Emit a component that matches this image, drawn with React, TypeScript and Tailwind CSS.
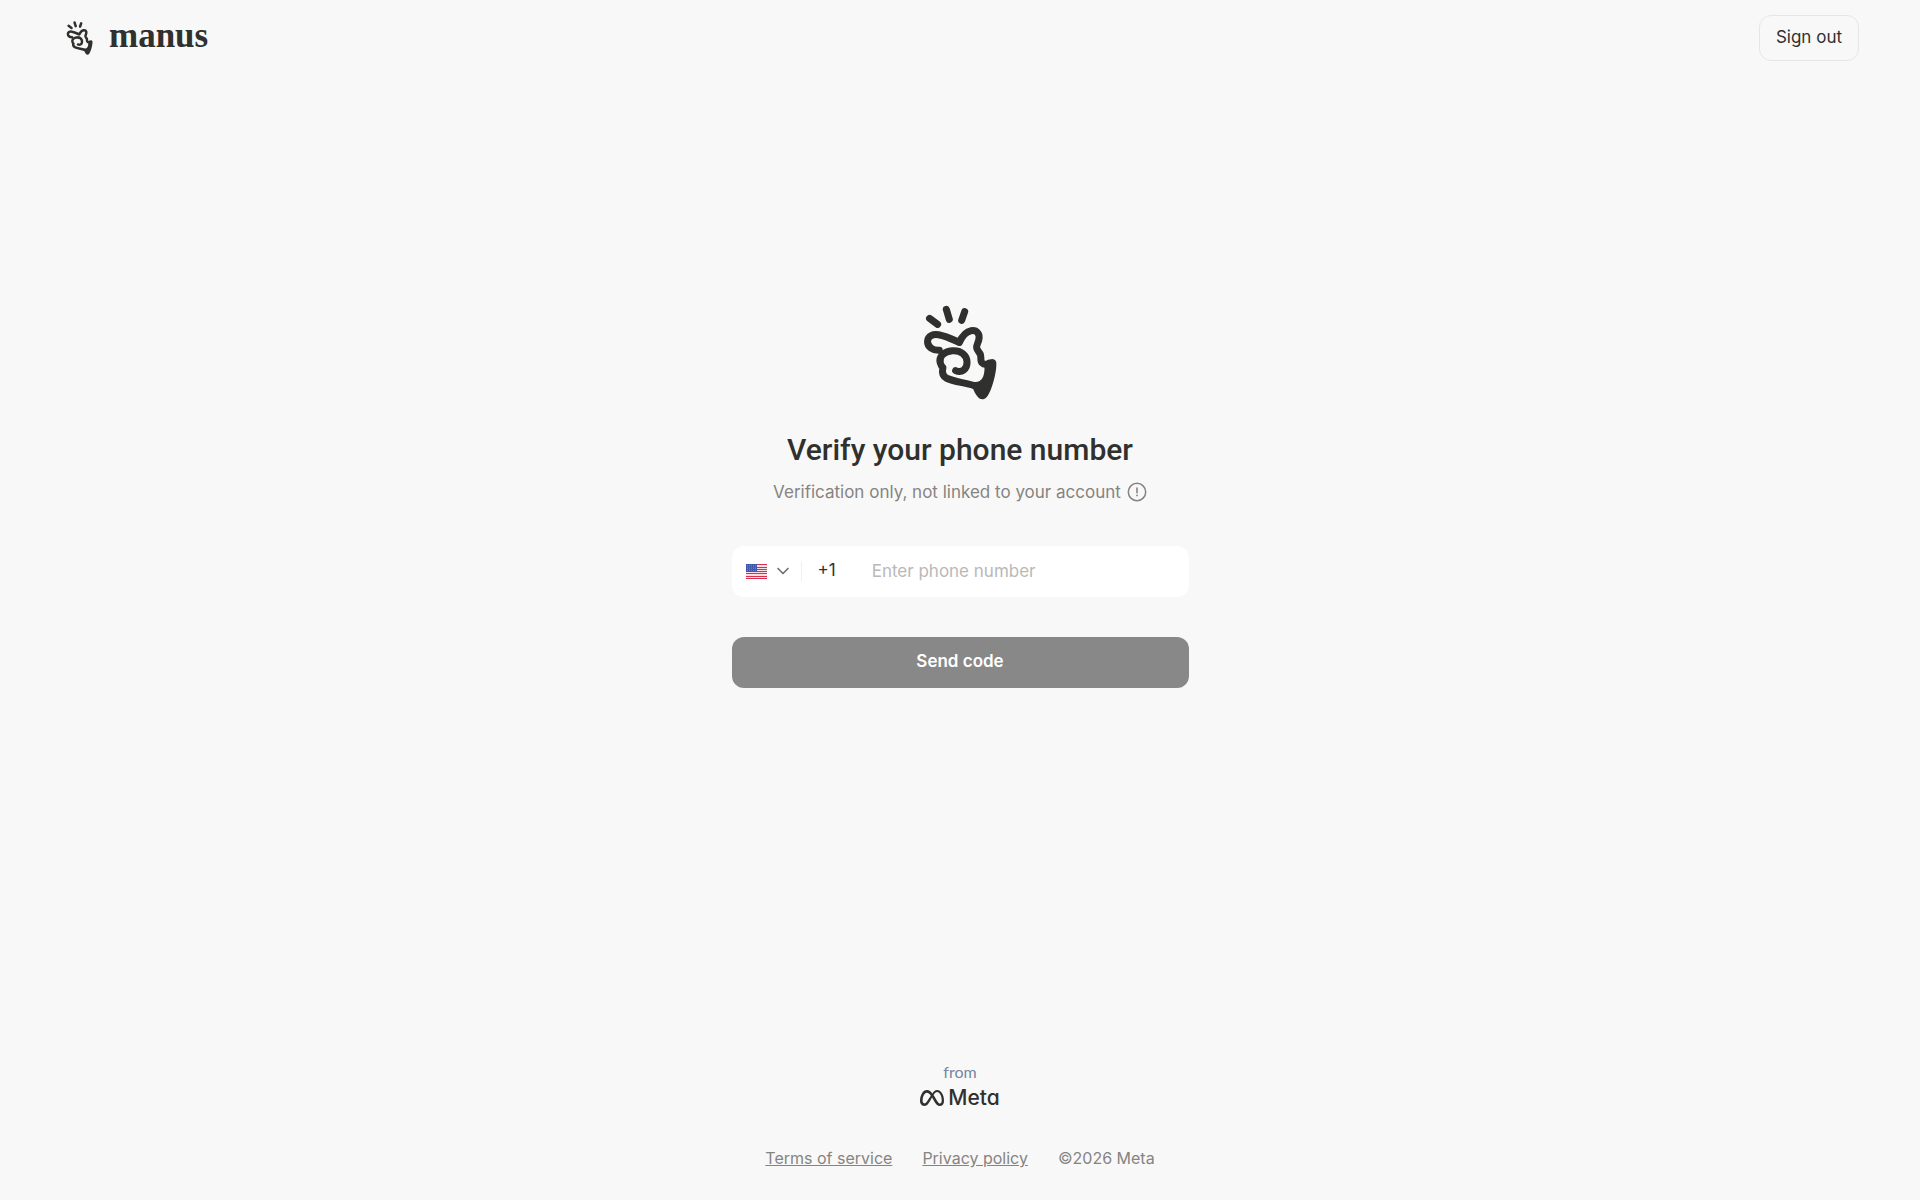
import type { FC, SVGProps } from "react";
import { SiMeta } from "react-icons/si";
import { ChevronDown } from "lucide-react";

const ManusMark: FC<SVGProps<SVGSVGElement>> = (props) => (
  <svg viewBox="66 46 220 284" fill="none" aria-hidden="true" {...props}>
    <g stroke="currentColor" strokeWidth={21} strokeLinecap="round" strokeLinejoin="round">
      {/* snap lines */}
      <path d="M85 86L109 104M135 59L144 89M190 66L181 92" />
      {/* finger and thumb */}
      <path d="M114 181C96 182 78 172 79 154C80 138 96 132 112 135C134 139 154 149 174 158C180 145 191 126 209 123C226 120 237 132 232 151C230 160 224 166 226 175C228 183 234 187 237 194C240 202 236 213 242 219C247 224 255 224 262 220" />
      {/* curled fingers */}
      <path d="M163 242C180 250 198 239 197 216C196 195 178 181 153 183C128 185 112 200 117 219C119 226 121 230 125 233C122 246 124 259 136 265C154 274 188 278 216 286" />
    </g>
    <path
      fill="currentColor"
      d="M258 215C264 206 280 204 284 216C288 238 272 302 256 321C249 330 236 330 230 322C222 313 218 303 214 295C206 288 210 277 220 276C242 278 251 257 249 226Z"
    />
  </svg>
);

const UsFlag: FC<SVGProps<SVGSVGElement>> = (props) => (
  <svg viewBox="0 0 21 15" aria-hidden="true" {...props}>
    <rect width="21" height="15" fill="#fbdfe4" />
    {[0, 3, 5, 7, 9, 12, 14].map((y) => (
      <rect key={y} y={y} width="21" height="1" fill="#d8304f" />
    ))}
    <rect width="11" height="8" fill="#4258ad" />
    {[1.5, 3.5, 5.5, 7.5, 9.5].map((x) => (
      <path key={x} d={`M${x} 1V7`} stroke="#a9b4dc" strokeWidth="0.6" strokeDasharray="0.7 1" />
    ))}
  </svg>
);

const AlertIcon: FC<SVGProps<SVGSVGElement>> = (props) => (
  <svg viewBox="0 0 20 20" fill="none" stroke="currentColor" aria-hidden="true" {...props}>
    <circle cx="10" cy="10" r="8.7" strokeWidth="1.5" />
    <path d="M10 6V10.8" strokeWidth="1.6" strokeLinecap="round" />
    <circle cx="10" cy="13.4" r="0.9" fill="currentColor" stroke="none" />
  </svg>
);

const Header = () => (
  <header className="flex items-center justify-between py-[15px] pr-[61px] pl-[66px]">
    <a href="#" className="flex items-center gap-4">
      <ManusMark className="h-[34px] w-[27px]" />
      <span className="pb-1 font-['Liberation_Serif',serif] text-[35px] leading-9 font-bold">manus</span>
    </a>
    <button type="button" className="h-[46px] rounded-xl border border-[#e6e6e5] px-4 text-[17px]">
      Sign out
    </button>
  </header>
);

const VerifyForm = () => (
  <form className="flex w-full max-w-[457px] flex-col items-center" onSubmit={(e) => e.preventDefault()}>
    <ManusMark className="h-[95px] w-[74px]" />
    <h1 className="mt-[30px] font-[Roboto,sans-serif] text-[30px] leading-10 font-medium whitespace-nowrap">
      Verify your phone number
    </h1>
    <p className="mt-2 flex items-center gap-[6px] text-[17px] leading-7 whitespace-nowrap text-[#858481]">
      Verification only, not linked to your account
      <button type="button" aria-label="More information">
        <AlertIcon className="size-5" />
      </button>
    </p>
    <div className="mt-10 flex h-[51px] w-full items-center rounded-xl bg-white pl-[14px]">
      <button type="button" aria-label="Country" aria-haspopup="listbox" className="flex items-center gap-[6px]">
        <UsFlag className="h-[15px] w-[21px]" />
        <ChevronDown className="size-5 text-[#70706d]" strokeWidth={2} />
      </button>
      <span className="ml-2 h-5 w-px bg-[#f0f0f0]" />
      <span className="ml-4 text-[17px]">+1</span>
      <input
        type="tel"
        aria-label="Phone number"
        placeholder="Enter phone number"
        className="ml-9 h-full min-w-0 flex-1 text-[17px] outline-none placeholder:text-[#b9b9b7]"
      />
    </div>
    <button type="submit" className="mt-10 h-[51px] w-full rounded-xl bg-[#888888] text-[17px] font-semibold text-white">
      Send code
    </button>
  </form>
);

const Footer = () => (
  <footer className="flex flex-col items-center pb-[30px]">
    <span className="font-[Lato,sans-serif] text-base leading-5 text-[#7586a0]">from</span>
    <div className="mt-1 flex items-center gap-1">
      <SiMeta className="size-6" aria-hidden="true" />
      <span className="text-[21px] leading-6 font-medium [font-feature-settings:'cv11']">Meta</span>
    </div>
    <div className="mt-9 flex gap-[30px] text-base leading-6 text-[#858481]">
      <a href="#" className="underline">Terms of service</a>
      <a href="#" className="underline">Privacy policy</a>
      <span>©2026 Meta</span>
    </div>
  </footer>
);

export default function App() {
  return (
    <div className="flex min-h-screen flex-col bg-[#f8f8f8] font-[Inter,sans-serif] text-[#30302e]">
      <Header />
      <main className="flex flex-1 items-center justify-center px-4 pb-[146px]">
        <VerifyForm />
      </main>
      <Footer />
    </div>
  );
}
